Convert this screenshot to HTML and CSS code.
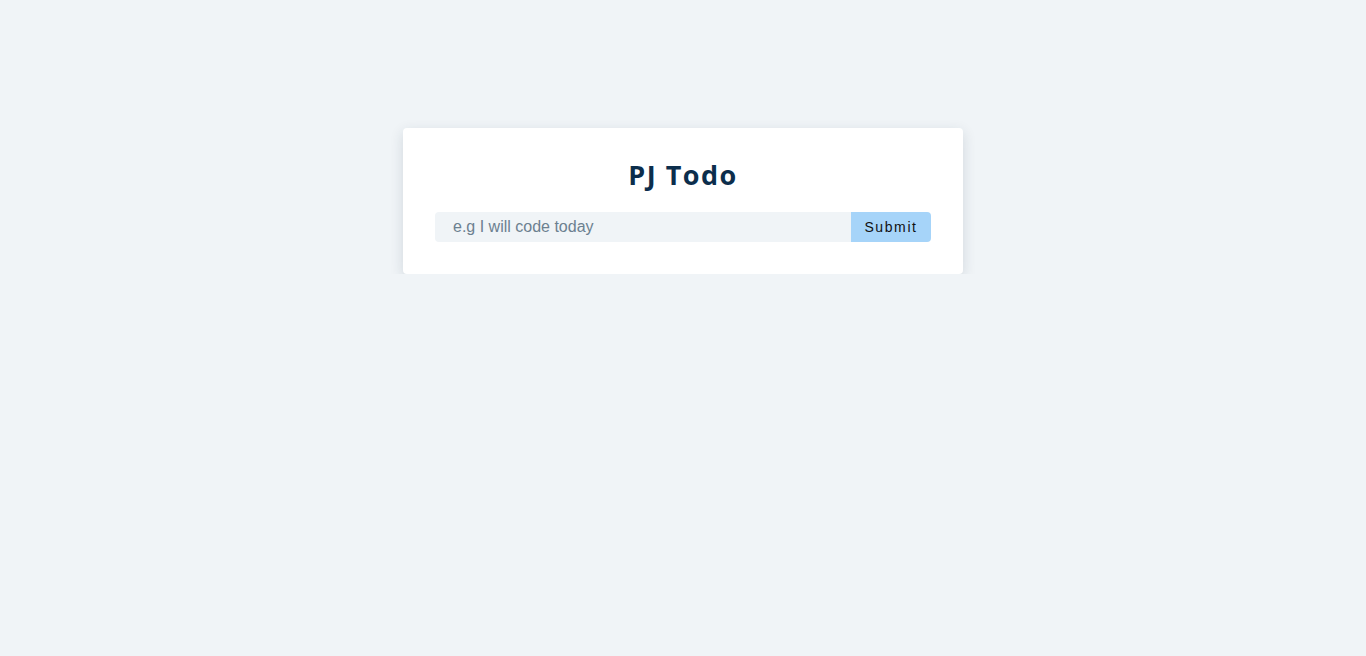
FILE: index.html
```html
<!DOCTYPE html>
<html>
<head>
<meta charset="utf-8">
<title>PJ Todo</title>
<link rel="stylesheet" href="styles.css">
</head>
<body>
<main class="page">
  <section class="card">
    <h1 class="title">PJ Todo</h1>
    <form class="todo-form">
      <input class="todo-input" type="text" placeholder="e.g I will code today">
      <button class="todo-submit" type="button">Submit</button>
    </form>
  </section>
</main>
</body>
</html>
```

FILE: styles.css
```css
html, body {
  margin: 0;
  padding: 0;
  background: #f0f4f7;
}
body {
  font-family: "Liberation Sans", Arial, sans-serif;
}
.page {
  display: flex;
  justify-content: center;
  padding-top: 128px;
}
.card {
  width: 560px;
  box-sizing: border-box;
  padding: 32px;
  background: #ffffff;
  border-radius: 4px;
  box-shadow: 0 4px 14px rgba(30, 50, 70, 0.14);
}
.title {
  margin: 0 0 22px;
  text-align: center;
  font-family: "Open Sans", "Noto Sans", sans-serif;
  font-weight: 700;
  font-size: 27px;
  line-height: 30px;
  letter-spacing: 1.5px;
  color: #0c2e4c;
}
.todo-form {
  display: flex;
  height: 30px;
}
.todo-input {
  flex: 1;
  min-width: 0;
  border: none;
  outline: none;
  margin: 0;
  padding: 0 18px;
  background: #f0f4f7;
  border-radius: 4px 0 0 4px;
  font-family: "Liberation Sans", Arial, sans-serif;
  font-size: 16px;
  color: #333;
}
.todo-input::placeholder {
  color: #6c8090;
}
.todo-submit {
  width: 80px;
  border: none;
  margin: 0;
  padding: 0;
  background: #a6d4f9;
  border-radius: 0 4px 4px 0;
  font-family: "Liberation Sans", Arial, sans-serif;
  font-size: 14px;
  letter-spacing: 1.6px;
  color: #111;
}
```
